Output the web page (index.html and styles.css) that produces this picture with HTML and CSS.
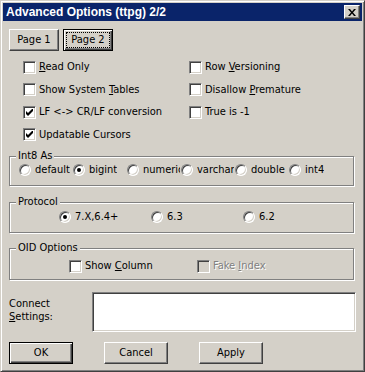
FILE: index.html
```html
<!DOCTYPE html>
<html lang="en">
<head>
  <meta charset="UTF-8">
  <title>Advanced Options (ttpg) 2/2</title>
  <link rel="stylesheet" href="styles.css">
</head>
<body>

  <div class="window">
    <div class="titlebar">
      <span class="title">Advanced Options (ttpg) 2/2</span>
      <button class="close">
        <svg width="8" height="7" viewBox="0 0 8 7"><path d="M0 0h2l2 2.5 2-2.5h2l-3 3.5 3 3.5h-2l-2-2.5-2 2.5h-2l3-3.5z" fill="#000"/></svg>
      </button>
    </div>

    <div class="content">
      <div class="tabs">
        <button class="btn">Page 1</button>
        <button class="btn default focused">Page 2</button>
      </div>

      <div class="checks">
        <label class="check"><span class="box"></span><span><u>R</u>ead Only</span></label>
        <label class="check"><span class="box"></span><span>Row <u>V</u>ersioning</span></label>
        <label class="check"><span class="box"></span><span>Show System <u>T</u>ables</span></label>
        <label class="check"><span class="box"></span><span>Disallow <u>P</u>remature</span></label>
        <label class="check"><span class="box checked"></span><span>LF &lt;-&gt; CR/LF conversion</span></label>
        <label class="check"><span class="box"></span><span>True is -1</span></label>
        <label class="check"><span class="box checked"></span><span>Updatable Cursors</span></label>
      </div>

      <fieldset class="group">
        <legend>Int8 As</legend>
        <div class="radios int8">
          <label class="radio"><span class="dot"></span><span class="txt">default</span></label>
          <label class="radio"><span class="dot on"></span><span class="txt">bigint</span></label>
          <label class="radio"><span class="dot"></span><span class="txt">numeric</span></label>
          <label class="radio"><span class="dot"></span><span class="txt">varchar</span></label>
          <label class="radio"><span class="dot"></span><span class="txt">double</span></label>
          <label class="radio"><span class="dot"></span><span class="txt">int4</span></label>
        </div>
      </fieldset>

      <fieldset class="group">
        <legend>Protocol</legend>
        <div class="radios protocol">
          <label class="radio"><span class="dot on"></span><span class="txt">7.X,6.4+</span></label>
          <label class="radio"><span class="dot"></span><span class="txt">6.3</span></label>
          <label class="radio"><span class="dot"></span><span class="txt">6.2</span></label>
        </div>
      </fieldset>

      <fieldset class="group">
        <legend>OID Options</legend>
        <div class="oid">
          <label class="check"><span class="box"></span><span>Show <u>C</u>olumn</span></label>
          <label class="check disabled"><span class="box"></span><span>Fake <u>I</u>ndex</span></label>
        </div>
      </fieldset>

      <div class="connect">
        <label class="connect-label">Connect<br><u>S</u>ettings:</label>
        <div class="textbox"></div>
      </div>

      <div class="actions">
        <button class="btn wide default">OK</button>
        <button class="btn wide">Cancel</button>
        <button class="btn wide">Apply</button>
      </div>
    </div>
  </div>

</body>
</html>
```

FILE: styles.css
```css
body {
  margin: 0;
  background: #d4d0c8;
  font-family: "Liberation Sans Narrow", "DejaVu Sans Condensed", "Liberation Sans", sans-serif;
  font-size: 11px;
  line-height: 14px;
  color: #000;
}

.window {
  width: 365px;
  height: 372px;
  box-sizing: border-box;
  padding: 2px;
  background: #d4d0c8;
  border: 1px solid;
  border-color: #d4d0c8 #404040 #404040 #d4d0c8;
  box-shadow: inset 1px 1px 0 #fff, inset -1px -1px 0 #808080;
}

/* title bar */
.titlebar {
  height: 18px;
  background: #0a246a;
  display: flex;
  align-items: center;
  justify-content: space-between;
  padding: 0 2px 0 3px;
}

.title {
  font-family: "Liberation Sans", Arial, sans-serif;
  font-weight: bold;
  font-size: 12px;
  color: #fff;
}

.close {
  width: 16px;
  height: 14px;
  padding: 0;
  display: flex;
  align-items: center;
  justify-content: center;
  background: #d4d0c8;
  border: 1px solid;
  border-color: #fff #404040 #404040 #fff;
  box-shadow: inset -1px -1px 0 #808080;
}

.content {
  padding: 0 6px;
}

/* push buttons */
.btn {
  height: 22px;
  padding: 0;
  font: inherit;
  color: #000;
  background: #d4d0c8;
  border: 1px solid;
  border-color: #fff #404040 #404040 #fff;
  box-shadow: inset -1px -1px 0 #808080;
}

.btn.default {
  border-color: #000;
  box-shadow: inset 1px 1px 0 #fff, inset -1px -1px 0 #404040, inset -2px -2px 0 #808080;
}

.btn.focused {
  outline: 1px dotted #000;
  outline-offset: -4px;
}

.tabs {
  display: flex;
  gap: 4px;
  margin-top: 8px;
}

.tabs .btn {
  width: 50px;
}

/* checkboxes */
.checks {
  display: grid;
  grid-template-columns: 166px auto;
  grid-auto-rows: 22.5px;
  align-items: center;
  margin: 5px 0 0 14px;
}

.check {
  display: flex;
  align-items: center;
  gap: 3px;
  white-space: nowrap;
}

.box {
  width: 13px;
  height: 13px;
  box-sizing: border-box;
  flex: none;
  background: #fff;
  border: 1px solid;
  border-color: #808080 #fff #fff #808080;
  box-shadow: inset 1px 1px 0 #404040, inset -1px -1px 0 #d4d0c8;
}

.box.checked {
  background: #fff url("data:image/svg+xml,%3Csvg xmlns='http://www.w3.org/2000/svg' width='7' height='7'%3E%3Cpath d='M0 2l2 2 5-5v3l-5 5-2-2z' fill='%23000'/%3E%3C/svg%3E") no-repeat 2px 2px;
}

.check.disabled {
  color: #808080;
  text-shadow: 1px 1px 0 #fff;
}

.check.disabled .box {
  background: #d4d0c8;
}

/* group boxes */
.group {
  margin: 0;
  padding: 0 6px 0 6px;
  width: 345px;
  box-sizing: border-box;
  border: 1px solid #808080;
  box-shadow: inset 1px 1px 0 #fff, 1px 1px 0 #fff;
}

.group legend {
  padding: 0 2px;
  line-height: 12px;
  background: #d4d0c8;
}

.checks + .group {
  margin-top: 4px;
}

.group + .group {
  margin-top: 10px;
}

.group:nth-of-type(3) {
  margin-top: 9px;
}

.radios {
  display: flex;
  align-items: center;
}

.radio {
  display: flex;
  align-items: center;
  gap: 4px;
  white-space: nowrap;
  overflow: hidden;
}

.dot {
  width: 12px;
  height: 12px;
  box-sizing: border-box;
  flex: none;
  border-radius: 50%;
  background: #fff;
  border: 1px solid;
  border-color: #808080 #fff #fff #808080;
  box-shadow: inset 1px 1px 0 #404040, inset -1px -1px 0 #d4d0c8;
  display: flex;
  align-items: center;
  justify-content: center;
}

.dot.on::after {
  content: "";
  width: 4px;
  height: 4px;
  border-radius: 50%;
  background: #000;
}

.int8 {
  height: 14px;
  margin: 1px 0 8px 3px;
}

.int8 .radio {
  width: 54px;
}

.int8 .txt {
  max-width: 37px;
  overflow: hidden;
}

.protocol {
  height: 16px;
  margin: 1px 0 7px 43px;
}

.protocol .radio {
  width: 92px;
}

.oid {
  display: flex;
  align-items: center;
  height: 22px;
  margin: 1px 0 2px 53px;
}

.oid .check:first-child {
  width: 128px;
}

/* connect settings */
.connect {
  display: flex;
  margin-top: 12px;
}

.connect-label {
  width: 83px;
  margin-top: 5px;
  line-height: 13px;
}

.textbox {
  width: 264px;
  height: 40px;
  box-sizing: border-box;
  background: #fff;
  border: 1px solid;
  border-color: #808080 #fff #fff #808080;
  box-shadow: inset 1px 1px 0 #404040, inset -1px -1px 0 #d4d0c8;
}

.actions {
  display: flex;
  gap: 31px;
  margin-top: 10px;
}

.actions .btn {
  width: 64px;
}
```
